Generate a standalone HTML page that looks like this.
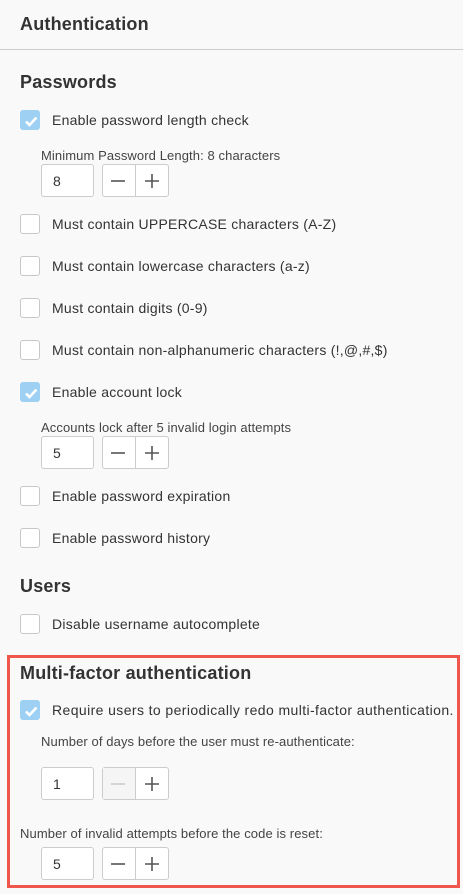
<!DOCTYPE html>
<html><head><style>
*{box-sizing:border-box;margin:0;padding:0}
body{width:463px;height:894px;background:#f9f9f9;font-family:"Liberation Sans",sans-serif;color:#333;position:relative;overflow:hidden}
h1,h2{position:absolute;font-weight:bold;color:#333;white-space:nowrap;letter-spacing:0.2px}
h1{font-size:18px;left:20px;top:14px}
h2{font-size:18px;left:20px}
.hr{position:absolute;left:0;top:49px;width:463px;height:1px;background:#ccc}
.cb{position:absolute;left:20px;width:20px;height:20px;border:1px solid #c8c8c8;border-radius:3px;background:#fff}
.cb.on{background:#9dd0f2;border-color:#9dd0f2}
.cb.on svg{position:absolute;left:2px;top:2px}
.lb{position:absolute;left:52px;font-size:14px;color:#333;white-space:nowrap;letter-spacing:0.25px}
.sl{position:absolute;font-size:13px;color:#444;white-space:nowrap;letter-spacing:0.1px}
.in{position:absolute;left:41px;width:53px;height:33px;border:1px solid #ccc;border-radius:3px;background:#fff;font-size:14px;padding:8px 0 0 11px}
.st{position:absolute;left:102px;width:67px;height:33px;border:1px solid #ccc;border-radius:3px;background:#fff}
.st .d{position:absolute;left:32px;top:0;width:1px;height:31px;background:#ccc}
.st svg{position:absolute;top:8px}
.red{position:absolute;left:7px;top:655px;width:453px;height:233px;border:3px solid #f0564b}
</style></head><body>
<h1>Authentication</h1>
<div class="hr"></div>
<h2 style="top:72px">Passwords</h2>

<div class="cb on" style="top:110px"><svg width="16" height="16"><path d="M3 8.5l3.5 3.5 7-7.5" stroke="#fff" stroke-width="2.6" fill="none"/></svg></div>
<div class="lb" style="top:112px">Enable password length check</div>
<div class="sl" style="left:41px;top:148px">Minimum Password Length: 8 characters</div>
<div class="in" style="top:164px">8</div>
<div class="st" style="top:164px"><svg style="left:7px" width="16" height="16"><path d="M1 8h14" stroke="#555" stroke-width="1.6"/></svg><div class="d"></div><svg style="left:41px" width="16" height="16"><path d="M1 8h14M8 1v14" stroke="#555" stroke-width="1.6"/></svg></div>

<div class="cb" style="top:214px"></div><div class="lb" style="top:216px">Must contain UPPERCASE characters (A-Z)</div>
<div class="cb" style="top:256px"></div><div class="lb" style="top:258px">Must contain lowercase characters (a-z)</div>
<div class="cb" style="top:298px"></div><div class="lb" style="top:300px">Must contain digits (0-9)</div>
<div class="cb" style="top:340px"></div><div class="lb" style="top:342px">Must contain non-alphanumeric characters (!,@,#,$)</div>

<div class="cb on" style="top:382px"><svg width="16" height="16"><path d="M3 8.5l3.5 3.5 7-7.5" stroke="#fff" stroke-width="2.6" fill="none"/></svg></div>
<div class="lb" style="top:384px">Enable account lock</div>
<div class="sl" style="left:41px;top:420px">Accounts lock after 5 invalid login attempts</div>
<div class="in" style="top:436px">5</div>
<div class="st" style="top:436px"><svg style="left:7px" width="16" height="16"><path d="M1 8h14" stroke="#555" stroke-width="1.6"/></svg><div class="d"></div><svg style="left:41px" width="16" height="16"><path d="M1 8h14M8 1v14" stroke="#555" stroke-width="1.6"/></svg></div>

<div class="cb" style="top:486px"></div><div class="lb" style="top:488px">Enable password expiration</div>
<div class="cb" style="top:528px"></div><div class="lb" style="top:530px">Enable password history</div>

<h2 style="top:576px">Users</h2>
<div class="cb" style="top:614px"></div><div class="lb" style="top:616px">Disable username autocomplete</div>

<div class="red"></div>
<h2 style="top:663px">Multi-factor authentication</h2>
<div class="cb on" style="top:700px"><svg width="16" height="16"><path d="M3 8.5l3.5 3.5 7-7.5" stroke="#fff" stroke-width="2.6" fill="none"/></svg></div>
<div class="lb" style="top:702px;letter-spacing:0.4px">Require users to periodically redo multi-factor authentication.</div>
<div class="sl" style="left:41px;top:734px">Number of days before the user must re-authenticate:</div>
<div class="in" style="top:767px">1</div>
<div class="st" style="top:767px"><div style="position:absolute;left:0;top:0;width:32px;height:31px;background:#f5f5f5"></div><svg style="left:7px" width="16" height="16"><path d="M1 8h14" stroke="#ccc" stroke-width="1.6"/></svg><div class="d"></div><svg style="left:41px" width="16" height="16"><path d="M1 8h14M8 1v14" stroke="#555" stroke-width="1.6"/></svg></div>
<div class="sl" style="left:20px;top:826px">Number of invalid attempts before the code is reset:</div>
<div class="in" style="top:847px">5</div>
<div class="st" style="top:847px"><svg style="left:7px" width="16" height="16"><path d="M1 8h14" stroke="#555" stroke-width="1.6"/></svg><div class="d"></div><svg style="left:41px" width="16" height="16"><path d="M1 8h14M8 1v14" stroke="#555" stroke-width="1.6"/></svg></div>
</body></html>
